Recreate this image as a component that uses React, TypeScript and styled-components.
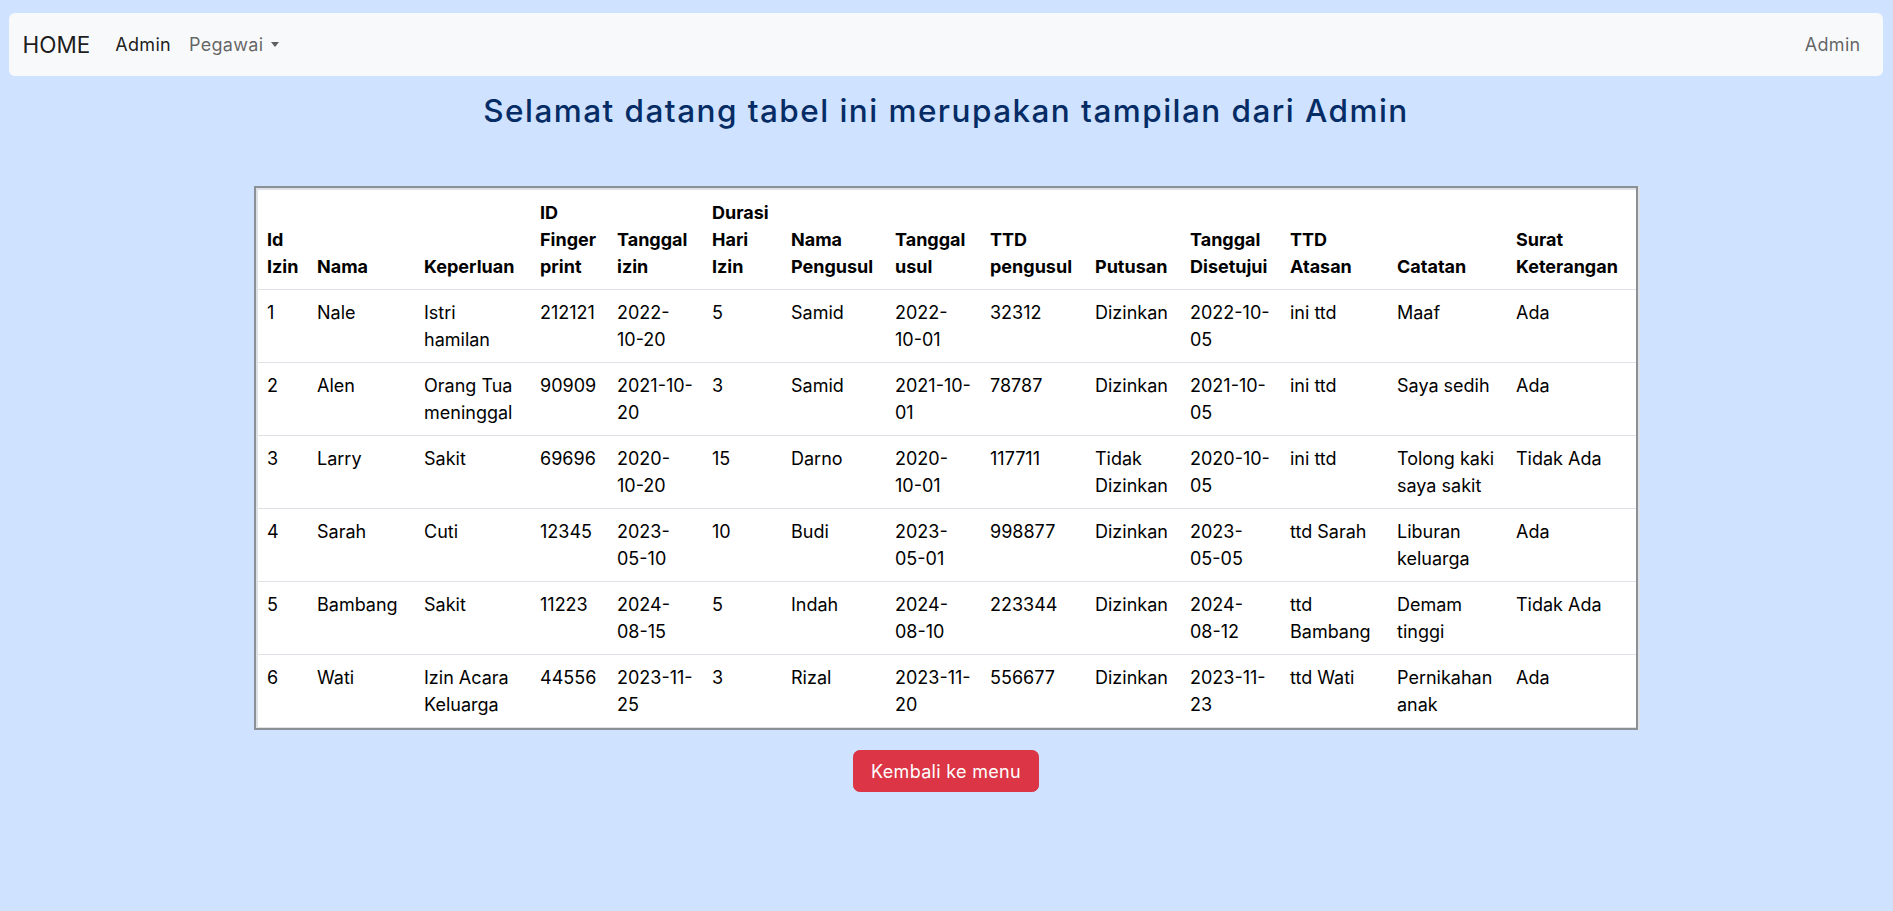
import React from 'react';
import styled, { createGlobalStyle } from 'styled-components';

const GlobalStyle = createGlobalStyle`
  html, body { margin: 0; }
  body {
    background: #cfe2ff;
    font-family: Inter, 'Open Sans', sans-serif;
    font-size: 18px;
    line-height: 1.5;
    color: #212529;
  }
  * { box-sizing: border-box; }
`;

const headers = [
  'Id Izin', 'Nama', 'Keperluan', 'ID Finger print', 'Tanggal izin', 'Durasi Hari Izin', 'Nama Pengusul',
  'Tanggal usul', 'TTD pengusul', 'Putusan', 'Tanggal Disetujui', 'TTD Atasan', 'Catatan', 'Surat Keterangan',
];

const widths = [50, 107, 116, 77, 95, 79, 104, 95, 105, 95, 100, 107, 119, 129];

const rows = [
  ['1', 'Nale', 'Istri hamilan', '212121', '2022-10-20', '5', 'Samid', '2022-10-01', '32312', 'Dizinkan', '2022-10-05', 'ini ttd', 'Maaf', 'Ada'],
  ['2', 'Alen', 'Orang Tua meninggal', '90909', '2021-10-20', '3', 'Samid', '2021-10-01', '78787', 'Dizinkan', '2021-10-05', 'ini ttd', 'Saya sedih', 'Ada'],
  ['3', 'Larry', 'Sakit', '69696', '2020-10-20', '15', 'Darno', '2020-10-01', '117711', 'Tidak Dizinkan', '2020-10-05', 'ini ttd', 'Tolong kaki saya sakit', 'Tidak Ada'],
  ['4', 'Sarah', 'Cuti', '12345', '2023-05-10', '10', 'Budi', '2023-05-01', '998877', 'Dizinkan', '2023-05-05', 'ttd Sarah', 'Liburan keluarga', 'Ada'],
  ['5', 'Bambang', 'Sakit', '11223', '2024-08-15', '5', 'Indah', '2024-08-10', '223344', 'Dizinkan', '2024-08-12', 'ttd Bambang', 'Demam tinggi', 'Tidak Ada'],
  ['6', 'Wati', 'Izin Acara Keluarga', '44556', '2023-11-25', '3', 'Rizal', '2023-11-20', '556677', 'Dizinkan', '2023-11-23', 'ttd Wati', 'Pernikahan anak', 'Ada'],
];

const Page = styled.div`
  padding: 13px 10px 40px 9px;
`;

const Navbar = styled.nav`
  display: flex;
  align-items: center;
  height: 63px;
  padding: 0 13.5px;
  background: #f8f9fa;
  border-radius: 6px;
`;

const Brand = styled.a`
  font-size: 22.5px;
  color: rgba(0, 0, 0, 0.9);
  text-decoration: none;
  margin-right: 16px;
`;

const NavList = styled.ul`
  display: flex;
  list-style: none;
  margin: 0;
  padding: 0;
  flex: 1;
`;

const NavItem = styled.li<{ $end?: boolean }>`
  margin-left: ${(p) => (p.$end ? 'auto' : '0')};
`;

const NavLink = styled.a<{ $active?: boolean }>`
  display: block;
  padding: 9px;
  letter-spacing: 0.3px;
  color: ${(p) => (p.$active ? 'rgba(0, 0, 0, 0.9)' : 'rgba(0, 0, 0, 0.62)')};
  text-decoration: none;
`;

const Caret = styled.span`
  display: inline-block;
  margin-left: 8px;
  vertical-align: 4px;
  border-top: 5px solid currentColor;
  border-left: 4.5px solid transparent;
  border-right: 4.5px solid transparent;
`;

const Title = styled.h3`
  margin: 16px 0 56px;
  text-align: center;
  font-size: 31.5px;
  font-weight: 500;
  letter-spacing: 1.45px;
  line-height: 1.2;
  color: #052c65;
`;

const Table = styled.table`
  margin: 0 auto;
  width: 1384px;
  table-layout: fixed;
  border-collapse: separate;
  border-spacing: 0;
  padding: 2px 0 0 2px;
  background: #fff;
  border: 2px solid #8b8f96;
  box-shadow: inset 2px 2px 0 #dee2e6, 2px 0 0 #dee2e6;
`;

const Col = styled.col<{ $w: number }>`
  width: ${(p) => p.$w}px;
`;

const Th = styled.th`
  padding: 9px;
  text-align: left;
  vertical-align: bottom;
  font-weight: 700;
  color: #000;
  border-bottom: 1px solid #dee2e6;
`;

const Td = styled.td`
  padding: 9px;
  vertical-align: top;
  color: #000;
  border-bottom: 1px solid #dee2e6;
`;

const Actions = styled.div`
  display: flex;
  justify-content: center;
  margin-top: 20px;
`;

const DangerButton = styled.button`
  font-family: inherit;
  font-size: 18px;
  line-height: 27px;
  letter-spacing: 0.3px;
  color: #fff;
  background: #dc3545;
  border: 1px solid #dc3545;
  border-radius: 6.75px;
  padding: 6.75px 17px;
  cursor: pointer;
`;

const App = () => (
  <>
    <GlobalStyle />
    <Page>
      <Navbar>
        <Brand href="#">HOME</Brand>
        <NavList>
          <NavItem>
            <NavLink $active href="#">Admin</NavLink>
          </NavItem>
          <NavItem>
            <NavLink href="#">
              Pegawai
              <Caret />
            </NavLink>
          </NavItem>
          <NavItem $end>
            <NavLink href="#">Admin</NavLink>
          </NavItem>
        </NavList>
      </Navbar>
      <Title>Selamat datang tabel ini merupakan tampilan dari Admin</Title>
      <Table>
        <colgroup>
          {widths.map((w, i) => (
            <Col key={i} $w={w} />
          ))}
        </colgroup>
        <thead>
          <tr>
            {headers.map((h) => (
              <Th key={h}>{h}</Th>
            ))}
          </tr>
        </thead>
        <tbody>
          {rows.map((r) => (
            <tr key={r[0]}>
              {r.map((c, i) => (
                <Td key={i}>{c}</Td>
              ))}
            </tr>
          ))}
        </tbody>
      </Table>
      <Actions>
        <DangerButton>Kembali ke menu</DangerButton>
      </Actions>
    </Page>
  </>
);

export default App;
